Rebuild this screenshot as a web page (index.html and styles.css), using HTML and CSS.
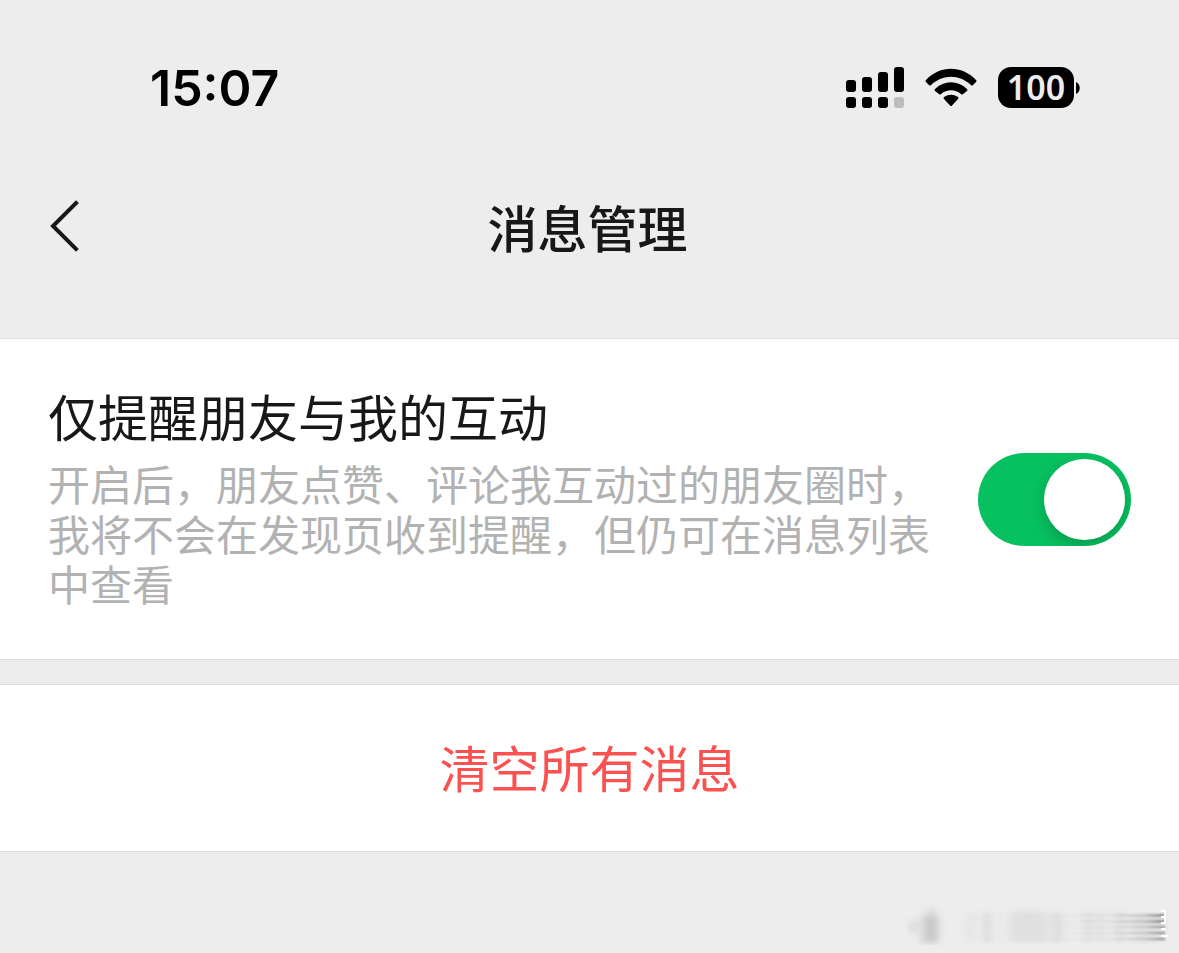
FILE: index.html
```html
<!DOCTYPE html>
<html lang="zh-CN">
<head>
    <meta charset="UTF-8">
    <meta name="viewport" content="width=device-width, initial-scale=1.0">
    <title>消息管理</title>
    <link rel="stylesheet" href="styles.css">
</head>
<body>
    <header>
        <div class="status-bar">
            <time class="clock">15:07</time>
            <div class="status-icons">
                <svg class="signal" width="58" height="42" viewBox="0 0 58 42" aria-hidden="true">
                    <rect x="0" y="13" width="10" height="12" rx="3"/>
                    <rect x="16" y="10" width="10" height="15" rx="3"/>
                    <rect x="32" y="5" width="10" height="20" rx="3"/>
                    <rect x="48" y="0" width="10" height="25" rx="3"/>
                    <rect x="0" y="30" width="10" height="11" rx="3"/>
                    <rect x="16" y="30" width="10" height="11" rx="3"/>
                    <rect x="32" y="30" width="10" height="11" rx="3"/>
                    <rect x="48" y="30" width="10" height="11" rx="3" fill="#bdbdbd"/>
                </svg>
                <svg class="wifi" width="52" height="42" viewBox="0 0 52 42" aria-hidden="true">
                    <path d="M1 13 C15 -2 37 -2 51 13 Q52 14 51 15 L48 18 Q47 19 46 18 C34 7 18 7 6 18 Q5 19 4 18 L1 15 Q0 14 1 13Z"/>
                    <path d="M10 22 C19 13 33 13 42 22 Q43 23 42 24 L38 27 Q37 28 36 27 C30 22 22 22 16 27 Q15 28 14 27 L10 24 Q9 23 10 22Z"/>
                    <path d="M19 30 Q26 25.500 33 30 Q34 31 33 32 L27 38.500 Q26 39.500 25 38.500 L19 32 Q18 31 19 30Z"/>
                </svg>
                <div class="battery">
                    <span class="battery-level">100</span>
                    <svg width="5" height="14" viewBox="0 0 5 14" aria-hidden="true">
                        <path d="M0 1 C5 3 5 11 0 13Z"/>
                    </svg>
                </div>
            </div>
        </div>
        <nav class="nav-bar">
            <button class="back" type="button" aria-label="返回">
                <svg width="32" height="54" viewBox="0 0 32 54" aria-hidden="true">
                    <path d="M28 4 L5 27 L28 50" fill="none" stroke="#181818" stroke-width="4" stroke-linecap="square"/>
                </svg>
            </button>
            <h1>消息管理</h1>
        </nav>
    </header>

    <main>
        <section class="setting">
            <div class="setting-text">
                <label for="friends-only">仅提醒朋友与我的互动</label>
                <p id="friends-only-desc">开启后，朋友点赞、评论我互动过的朋友圈时，我将不会在发现页收到提醒，但仍可在消息列表中查看</p>
            </div>
            <input class="switch" type="checkbox" id="friends-only" aria-describedby="friends-only-desc" checked>
        </section>
        <button class="clear" type="button">清空所有消息</button>
    </main>

    <footer>
        <!-- smudged stamp -->
        <svg width="264" height="44" viewBox="0 0 264 44" aria-hidden="true">
            <defs>
                <filter id="soft" x="-20%" y="-20%" width="140%" height="140%">
                    <feGaussianBlur stdDeviation="4 3"/>
                </filter>
                <filter id="softer" x="-5%" y="-5%" width="110%" height="110%">
                    <feGaussianBlur stdDeviation="1"/>
                </filter>
                <linearGradient id="streak">
                    <stop offset="0" stop-color="#777" stop-opacity="0"/>
                    <stop offset="0.700" stop-color="#777" stop-opacity="0.060"/>
                    <stop offset="0.900" stop-color="#777" stop-opacity="0.300"/>
                    <stop offset="1" stop-color="#777" stop-opacity="0.900"/>
                </linearGradient>
            </defs>
            <g filter="url(#soft)" fill="#888">
                <rect x="2" y="20" width="8" height="12" opacity="0.200"/>
                <rect x="14" y="14" width="18" height="28" opacity="0.260"/>
                <rect x="22" y="6" width="5" height="36" opacity="0.260"/>
                <rect x="60" y="12" width="6" height="30" opacity="0.120"/>
                <rect x="77" y="12" width="6" height="30" opacity="0.200"/>
                <rect x="102" y="10" width="38" height="32" opacity="0.120"/>
                <rect x="146" y="10" width="8" height="32" opacity="0.180"/>
                <rect x="178" y="10" width="6" height="32" opacity="0.160"/>
                <rect x="191" y="10" width="6" height="32" opacity="0.140"/>
                <rect x="209" y="10" width="8" height="32" opacity="0.140"/>
                <rect x="224" y="14" width="30" height="28" opacity="0.120"/>
            </g>
            <g fill="url(#streak)" filter="url(#softer)">
                <rect x="60" y="13" width="198" height="3"/>
                <rect x="60" y="19" width="198" height="3"/>
                <rect x="60" y="25" width="198" height="2"/>
                <rect x="60" y="31" width="198" height="2"/>
                <rect x="60" y="37" width="198" height="2"/>
            </g>
            <path d="M254 10 H258 V22 H254 M254 16 H258 M254 28 H259 M254 35 H261" fill="none" stroke="#fff" stroke-width="2"/>
        </svg>
    </footer>
</body>
</html>
```

FILE: styles.css
```css
* {
    box-sizing: border-box;
}
body {
    margin: 0;
    min-height: 100vh;
    display: flex;
    flex-direction: column;
    background-color: #ededed;
    color: #181818;
    font-family: "Noto Sans CJK SC", sans-serif;
}
button {
    border: none;
    background: none;
    padding: 0;
    color: inherit;
    font-family: inherit;
    cursor: pointer;
}
svg {
    display: block;
}
header {
    padding-bottom: 62px;
}
.status-bar {
    display: flex;
    justify-content: space-between;
    align-items: center;
    height: 176px;
    padding: 0 98px 0 150px;
    color: #000;
}
.clock {
    font-family: Inter, sans-serif;
    font-size: 50px;
    font-weight: 600;
    line-height: 60px;
}
.status-icons {
    display: flex;
    align-items: flex-start;
    gap: 21px;
}
.battery {
    display: flex;
    align-items: center;
    gap: 2px;
}
.battery-level {
    width: 76px;
    border-radius: 13px;
    background-color: #000;
    color: #ededed;
    font-family: "Noto Sans", sans-serif;
    font-size: 34px;
    font-weight: 600;
    line-height: 41px;
    text-align: center;
}
.nav-bar {
    display: grid;
    grid-template-columns: 48px 1fr 48px;
    align-items: center;
    height: 100px;
    padding: 0 52px 0 48px;
}
h1 {
    margin: 0;
    font-size: 50px;
    font-weight: 500;
    line-height: 72px;
    text-align: center;
}
.setting {
    display: flex;
    align-items: center;
    justify-content: space-between;
    gap: 36px;
    padding: 0 48px;
    background-color: #fff;
    border-top: 1px solid #dedede;
    border-bottom: 1px solid #dedede;
}
.setting-text {
    flex: 1;
    padding: 41px 0 51px;
}
.setting label {
    display: block;
    font-size: 50px;
    line-height: 70px;
}
.setting p {
    margin: 8px 0 0;
    color: #b2b2b2;
    font-size: 42px;
    line-height: 50px;
}
.switch {
    appearance: none;
    flex: none;
    display: flex;
    align-items: center;
    width: 153px;
    height: 93px;
    margin: 0;
    padding: 6px;
    border-radius: 48px;
    background-color: #ccc;
    overflow: hidden;
    cursor: pointer;
}
.switch::before {
    content: "";
    width: 81px;
    height: 81px;
    border-radius: 50%;
    background-color: #fff;
    box-shadow: 0 6px 16px rgba(0, 0, 0, 0.2);
}
.switch:checked {
    justify-content: flex-end;
    background-color: #07c160;
}
.clear {
    width: 100%;
    margin-top: 24px;
    padding: 45px 0 49px;
    background-color: #fff;
    border-top: 1px solid #dedede;
    border-bottom: 1px solid #dedede;
    color: #fa5151;
    font-size: 50px;
    line-height: 72px;
}
footer {
    display: flex;
    justify-content: flex-end;
    margin-top: auto;
    padding: 0 8px 8px;
}
```
